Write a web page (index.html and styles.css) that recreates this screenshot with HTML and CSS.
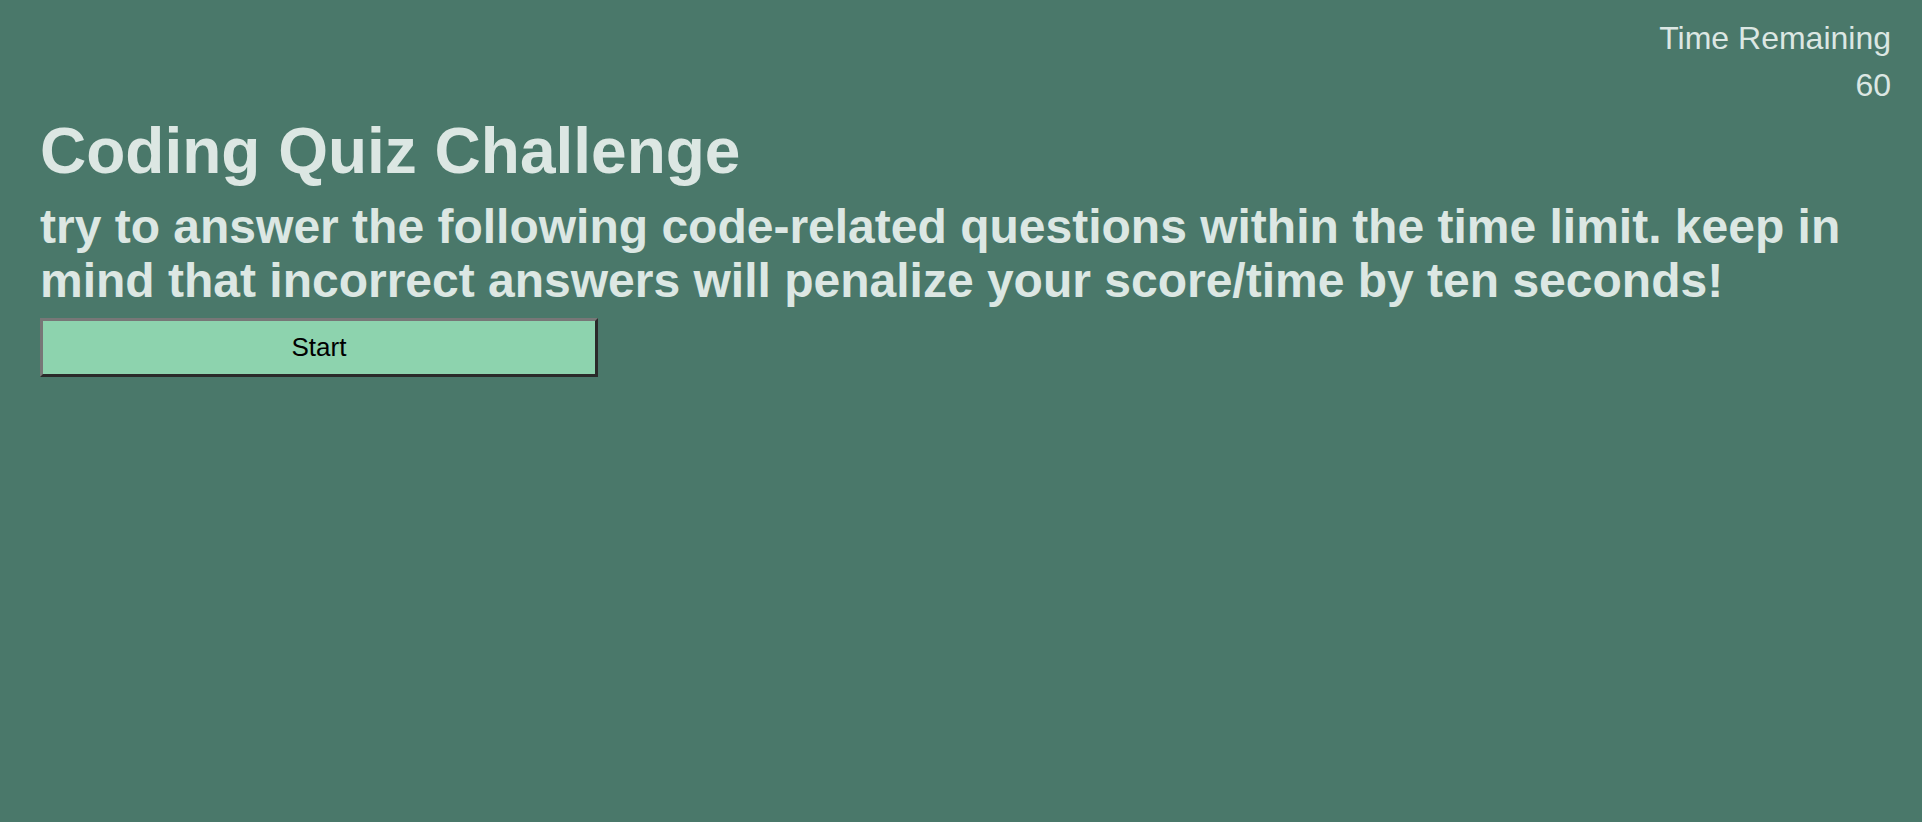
FILE: index.html
```html
<!DOCTYPE html>
<html lang="en">
<head>
<meta charset="utf-8">
<title>Coding Quiz Challenge</title>
<link rel="stylesheet" href="styles.css">
</head>
<body>
<header class="timer">
  <div class="timer-label">Time Remaining</div>
  <div class="timer-value">60</div>
</header>
<main class="intro">
  <h1 class="title">Coding Quiz Challenge</h1>
  <h2 class="lead">try to answer the following code-related questions within the time limit. keep in mind that incorrect answers will penalize your score/time by ten seconds!</h2>
  <button class="start-btn" type="button">Start</button>
</main>
</body>
</html>
```
FILE: styles.css
```css
html, body {
  margin: 0;
  padding: 0;
}
body {
  background: #4a786a;
  color: #dce7e3;
  font-family: "Liberation Sans", Arial, sans-serif;
  min-height: 822px;
}
.timer {
  display: flex;
  flex-direction: column;
  align-items: flex-end;
  padding: 20px 31px 0 0;
  font-size: 32px;
  line-height: 37px;
  row-gap: 10px;
}
.intro {
  padding: 0 40px;
  display: flex;
  flex-direction: column;
  align-items: flex-start;
}
.title {
  margin: 10px 0 0;
  font-size: 64px;
  line-height: 74px;
  font-weight: bold;
}
.lead {
  margin: 12px 0 0;
  font-size: 48px;
  line-height: 54px;
  font-weight: bold;
}
.start-btn {
  margin-top: 10px;
  width: 558px;
  height: 59px;
  background: #8dd3ae;
  color: #000;
  font-family: "Liberation Sans", Arial, sans-serif;
  font-size: 26px;
  border: 3px solid #777;
  border-right-color: #2a2a2a;
  border-bottom-color: #2a2a2a;
  padding: 0;
}
```
